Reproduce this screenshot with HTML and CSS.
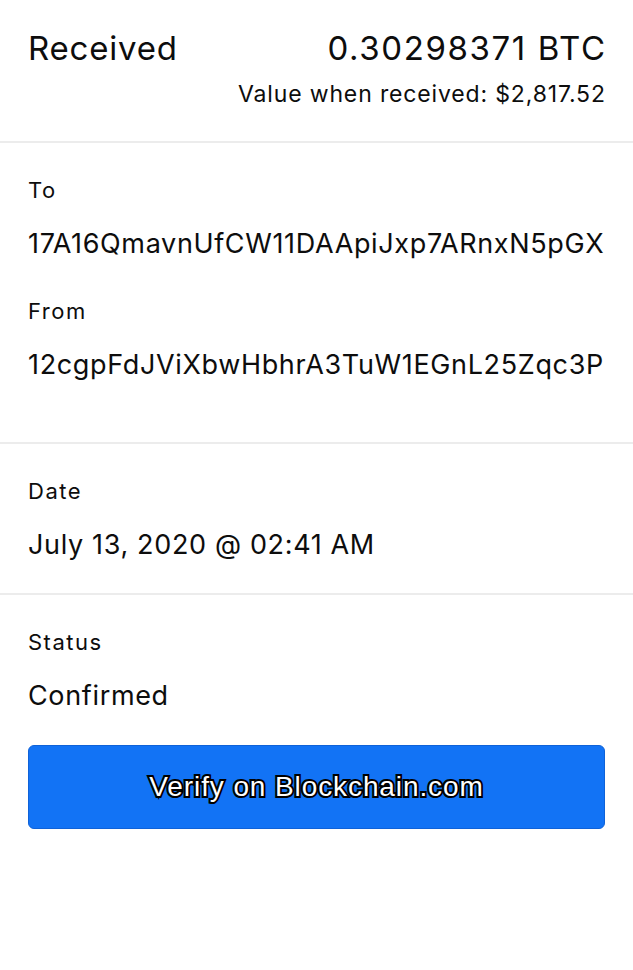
FILE: index.html
```html
<!DOCTYPE html>
<html>
<head>
<meta charset="utf-8">
<link rel="stylesheet" href="styles.css">
</head>
<body>
<div class="page">
  <section class="header">
    <div class="header-row">
      <span class="title">Received</span>
      <span class="amount">0.30298371 BTC</span>
    </div>
    <div class="fiat">Value when received: $2,817.52</div>
  </section>
  <section class="block block-addr">
    <div class="label">To</div>
    <div class="value">17A16QmavnUfCW11DAApiJxp7ARnxN5pGX</div>
    <div class="label label-gap">From</div>
    <div class="value">12cgpFdJViXbwHbhrA3TuW1EGnL25Zqc3P</div>
  </section>
  <section class="block block-date">
    <div class="label">Date</div>
    <div class="value">July 13, 2020 @ 02:41 AM</div>
  </section>
  <section class="block block-last">
    <div class="label">Status</div>
    <div class="value">Confirmed</div>
    <button class="verify">Verify on Blockchain.com</button>
  </section>
</div>
</body>
</html>
```
FILE: styles.css
```css
html, body {
  margin: 0;
  padding: 0;
  background: #ffffff;
}
body {
  font-family: Inter, "Noto Sans", sans-serif;
  color: #0d0d0d;
}
.page {
  width: 633px;
}
.header {
  padding: 28px 28px 0 28px;
  height: 113px;
  border-bottom: 2px solid #ececec;
}
.header-row {
  display: flex;
  justify-content: space-between;
  align-items: baseline;
}
.title {
  font-size: 33px;
  line-height: 40px;
  letter-spacing: 0.8px;
}
.amount {
  font-size: 33px;
  line-height: 40px;
  letter-spacing: 1.6px;
  margin-right: -1.6px;
}
.fiat {
  text-align: right;
  font-size: 23px;
  line-height: 28px;
  letter-spacing: 0.85px;
  margin-right: -0.85px;
  margin-top: 12px;
}
.block {
  padding: 0 28px;
  border-bottom: 2px solid #ececec;
}
.block-addr {
  height: 299px;
}
.block-date {
  height: 149px;
}
.label {
  font-size: 22px;
  line-height: 28px;
  letter-spacing: 1.5px;
  padding-top: 33px;
}
.label-gap {
  padding-top: 36px;
}
.value {
  font-size: 27px;
  line-height: 34px;
  letter-spacing: 0.65px;
  margin-top: 23px;
  white-space: nowrap;
}
.block-last {
  border-bottom: none;
}
.verify {
  display: flex;
  align-items: center;
  justify-content: center;
  width: 577px;
  height: 84px;
  margin-top: 32px;
  border: 1px solid #0f62d8;
  border-radius: 6px;
  background: #1273f5;
  font-family: "Liberation Sans", Arial, sans-serif;
  font-size: 28px;
  letter-spacing: 0.9px;
  color: #ffffff;
  -webkit-text-stroke: 4px #000000;
  paint-order: stroke fill;
  padding: 0;
}
```
